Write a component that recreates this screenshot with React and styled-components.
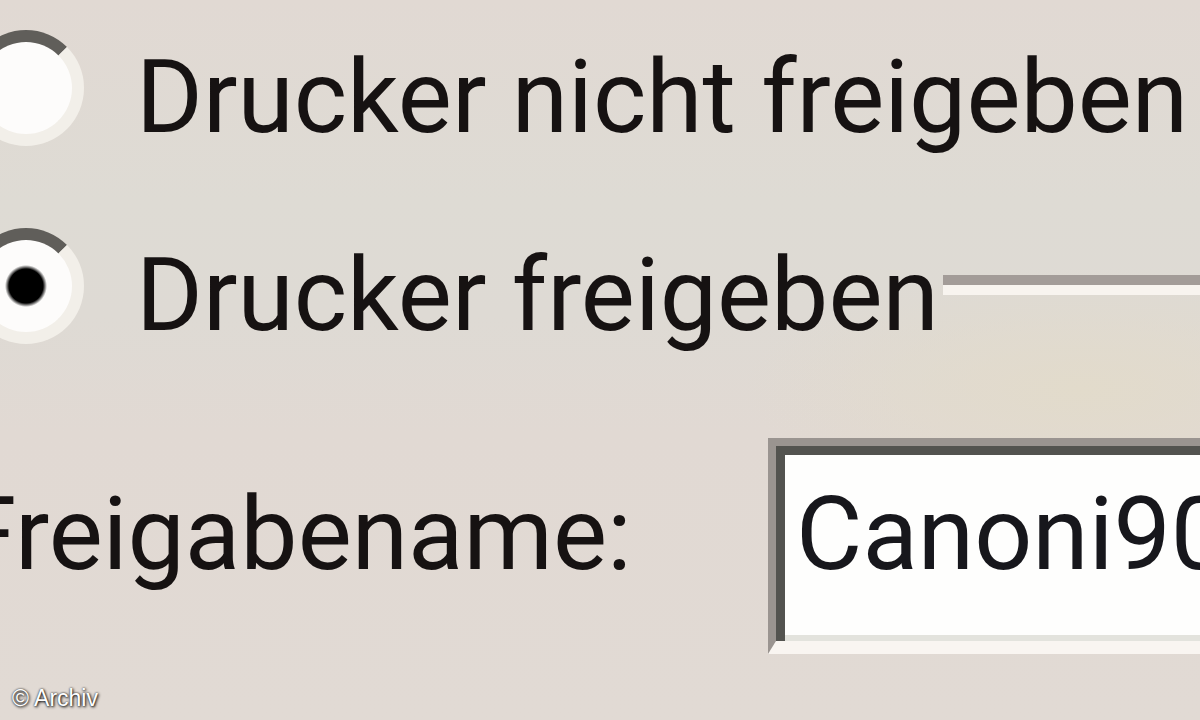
import React, { useState } from 'react';
import styled, { createGlobalStyle } from 'styled-components';

const GlobalStyle = createGlobalStyle`
  * {
    box-sizing: border-box;
  }
  body {
    margin: 0;
    background: #e1dad4;
  }
`;

const Dialog = styled.form`
  display: flex;
  flex-direction: column;
  min-height: 100vh;
  overflow: hidden;
  color: #161212;
  font-family: Roboto, "Liberation Sans", Arial, sans-serif;
  font-size: 102px;
  background:
    radial-gradient(ellipse at 90% 54%, #e2dbcb 0%, transparent 22%),
    linear-gradient(180deg, #e1d9d3 0%, #dedbd4 28%, #dedad4 44%, #e1d9d3 60%, #e1dad4 100%);
`;

const OptionRow = styled.div`
  display: flex;
  align-items: center;
  height: 180px;
  margin-bottom: 18px;
`;

const Radio = styled.input`
  appearance: none;
  flex: none;
  width: 116px;
  height: 116px;
  margin: 0 52px 4px -32px;
  border: 12px solid;
  border-color: #605e5a #f2efe9 #f2efe9 #8a8682;
  border-radius: 50%;
  background: #fdfcfb;

  &:checked {
    background: radial-gradient(circle, #000 17px, #fdfcfb 21px);
  }
`;

const Label = styled.label`
  padding-top: 14px;
  line-height: 176px;
  white-space: nowrap;
`;

const Rule = styled.hr`
  flex: 1;
  height: 20px;
  margin: 0 0 6px 4px;
  border: 0;
  border-top: 10px solid #a39c98;
  border-bottom: 10px solid #f8f4ef;
`;

const FieldRow = styled.div`
  display: flex;
  align-items: flex-start;
  margin-top: 42px;
`;

const FieldLabel = styled(Label)`
  flex: none;
  width: 808px;
  margin-left: -40px;
  padding-top: 8px;
`;

const TextBox = styled.input`
  flex: 1;
  min-width: 0;
  height: 216px;
  margin-right: -60px;
  padding: 0 0 20px 20px;
  border: 8px solid;
  border-bottom-width: 13px;
  border-color: #9a9490 #f9f5f1 #f9f5f1 #9a9490;
  border-radius: 0;
  outline: 0;
  background: #fefefd;
  box-shadow: inset 9px 9px #53534f, inset 0 -6px #e3e3dd;
  color: #17171c;
  font: inherit;
`;

const Credit = styled.footer`
  margin-top: auto;
  padding: 0 12px 8px;
  color: #fff;
  font-family: "Liberation Sans", Arial, sans-serif;
  font-size: 23px;
  line-height: 28px;
  text-shadow: 1px 1px 3px #000, 0 0 2px #333;
`;

const App = () => {
  const [shared, setShared] = useState(true);
  const [name, setName] = useState('Canoni90');

  return (
    <Dialog>
      <GlobalStyle />
      <OptionRow>
        <Radio type="radio" name="share" id="share-off" checked={!shared} onChange={() => setShared(false)} />
        <Label htmlFor="share-off">Drucker nicht freigeben</Label>
      </OptionRow>
      <OptionRow>
        <Radio type="radio" name="share" id="share-on" checked={shared} onChange={() => setShared(true)} />
        <Label htmlFor="share-on">Drucker freigeben</Label>
        <Rule />
      </OptionRow>
      <FieldRow>
        <FieldLabel htmlFor="share-name">Freigabename:</FieldLabel>
        <TextBox id="share-name" type="text" value={name} onChange={e => setName(e.target.value)} />
      </FieldRow>
      <Credit>© Archiv</Credit>
    </Dialog>
  )
}

export default App;
